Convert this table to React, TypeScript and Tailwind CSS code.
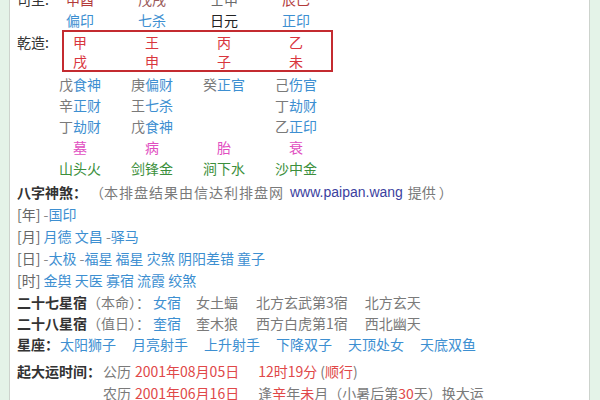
import React from "react";

const F = { fontFamily: '"Noto Sans CJK SC", "Noto Sans", sans-serif' };

const blue = "text-[#3d8fd1]";
const gray = "text-[#7a7a7a]";

function Cols({ items }: { items: React.ReactNode[] }) {
  return (
    <>
      {items.map((it, i) => (
        <div key={i} className="w-[72px] text-center shrink-0">
          {it}
        </div>
      ))}
    </>
  );
}

function Hid({ s, g }: { s: string; g: string }) {
  return (
    <span>
      <span className={gray}>{s}</span>
      <span className={blue}>{g}</span>
    </span>
  );
}

export default function App() {
  return (
    <div
      className="w-[600px] h-[400px] overflow-hidden flex bg-[#e6f4ea] text-[14px] text-[#222] whitespace-nowrap"
      style={F}
    >
      <div className="w-[9px] shrink-0 bg-[#e4f3e8]" />
      <div className="w-[581px] shrink-0 bg-white border-l border-r border-[#cdd3cd] overflow-hidden">
        {/* cut top row */}
        <div className="flex h-[22px] leading-[22px] mt-[-12px] pl-[7px]">
          <div className="w-[27px] shrink-0 text-[#333]">司主:</div>
          <Cols
            items={[
              <span className="text-[#b23a3a]">申酉</span>,
              <span className="text-[#9a5a5a]">戊戌</span>,
              <span className="text-[#6a6a6a]">壬申</span>,
              <span className="text-[#b23a3a]">辰巳</span>,
            ]}
          />
        </div>
        {/* main stars */}
        <div className="flex h-[21px] leading-[21px] pl-[34px]">
          <Cols
            items={[
              <span className={blue}>偏印</span>,
              <span className={blue}>七杀</span>,
              <span className="text-[#222]">日元</span>,
              <span className={blue}>正印</span>,
            ]}
          />
        </div>
        {/* box row */}
        <div className="flex pl-[7px] mt-[-1px]">
          <div className="w-[45px] shrink-0 pt-[3px] leading-[19px] text-[#333]">乾造:</div>
          <div className="w-[271px] h-[42px] border-2 border-[#c42b30] box-border">
            <div className="ml-[-20px] pt-[1px] text-[#d9363e] leading-[19px]">
              <div className="flex h-[19px]">
                <Cols items={["甲", "王", "丙", "乙"]} />
              </div>
              <div className="flex h-[19px]">
                <Cols items={["戌", "申", "子", "未"]} />
              </div>
            </div>
          </div>
        </div>
        {/* hidden stems */}
        <div className="pt-[2px] pl-[34px] leading-[21px]">
          <div className="flex h-[21px]">
            <Cols
              items={[
                <Hid s="戊" g="食神" />,
                <Hid s="庚" g="偏财" />,
                <Hid s="癸" g="正官" />,
                <Hid s="己" g="伤官" />,
              ]}
            />
          </div>
          <div className="flex h-[21px]">
            <Cols items={[<Hid s="辛" g="正财" />, <Hid s="王" g="七杀" />, "", <Hid s="丁" g="劫财" />]} />
          </div>
          <div className="flex h-[21px]">
            <Cols items={[<Hid s="丁" g="劫财" />, <Hid s="戊" g="食神" />, "", <Hid s="乙" g="正印" />]} />
          </div>
          <div className="flex h-[21px] text-[#e14ec1]">
            <Cols items={["墓", "病", "胎", "衰"]} />
          </div>
          <div className="flex h-[21px] text-[#3c8f3c]">
            <Cols items={["山头火", "剑锋金", "涧下水", "沙中金"]} />
          </div>
        </div>
        {/* lower section */}
        <div className="pl-[7px] pt-[2px] leading-[22px]">
          <div className="h-[22px] flex">
            <span className="font-bold text-[#333]">八字神煞：</span>
            <span className={`${gray} ml-[3px]`}>（</span>
            <span className={`${gray} tracking-[1px]`}>本排盘结果由信达利排盘网</span>
            <span
              className="text-[#3b3fa0] ml-[6px]"
              style={{ fontFamily: '"Liberation Sans", Arial, sans-serif' }}
            >
              www.paipan.wang
            </span>
            <span className={`${gray} ml-[5px]`}>提供</span>
            <span className={`${gray} ml-[3px]`}>）</span>
          </div>
          <div className="h-[22px]">
            <span className="text-[#666]">[年]</span> <span className="text-[#888]">-</span>
            <span className={blue}>国印</span>
          </div>
          <div className="h-[22px]">
            <span className="text-[#666]">[月]</span>{" "}
            <span className={blue}>月德 文昌 </span>
            <span className="text-[#888]">-</span>
            <span className={blue}>驿马</span>
          </div>
          <div className="h-[22px]">
            <span className="text-[#666]">[日]</span> <span className="text-[#888]">-</span>
            <span className={blue}>太极 </span>
            <span className="text-[#888]">-</span>
            <span className={blue}>福星 福星 灾煞 阴阳差错 童子</span>
          </div>
          <div className="h-[22px]">
            <span className="text-[#666]">[时]</span>{" "}
            <span className={blue}>金舆 天医 寡宿 流霞 绞煞</span>
          </div>
          <div className="h-[22px] flex">
            <span className="font-bold text-[#333]">二十七星宿</span>
            <span className={gray}>（本命）：</span>
            <span className={`${blue} ml-[3px]`}>女宿</span>
            <span className={`${gray} ml-[15px]`}>女土蝠</span>
            <span className={`${gray} ml-[18px]`}>北方玄武第3宿</span>
            <span className={`${gray} ml-[17px]`}>北方玄天</span>
          </div>
          <div className="h-[21px] leading-[21px] flex">
            <span className="font-bold text-[#333]">二十八星宿</span>
            <span className={gray}>（值日）：</span>
            <span className={`${blue} ml-[3px]`}>奎宿</span>
            <span className={`${gray} ml-[15px]`}>奎木狼</span>
            <span className={`${gray} ml-[18px]`}>西方白虎第1宿</span>
            <span className={`${gray} ml-[17px]`}>西北幽天</span>
          </div>
          <div className="h-[20px] leading-[20px] flex">
            <span className="font-bold text-[#333]">星座：</span>
            <div className={`${blue} ml-[1px] flex gap-[16px]`}>
              <span>太阳狮子</span>
              <span>月亮射手</span>
              <span>上升射手</span>
              <span>下降双子</span>
              <span>天顶处女</span>
              <span>天底双鱼</span>
            </div>
          </div>
          <div className="h-[22px] flex mt-[6px]">
            <span className="font-bold text-[#333]">起大运时间：</span>
            <span className={`${gray} ml-[2px]`}>公历</span>
            <span className="text-[#e04848] ml-[4px]">2001年08月05日</span>
            <span className="text-[#e04848] ml-[19px]">12时19分</span>
            <span className={`${gray} ml-[3px]`}>(</span>
            <span className="text-[#e04848]">顺行</span>
            <span className={gray}>)</span>
          </div>
          <div className="h-[22px] flex pl-[86px]">
            <span className={gray}>农历</span>
            <span className="text-[#e04848] ml-[4px]">2001年06月16日</span>
            <span className={`${gray} ml-[19px]`}>逢</span>
            <span className="text-[#e04848]">辛</span>
            <span className={gray}>年</span>
            <span className="text-[#e04848]">未</span>
            <span className={gray}>月（小暑后第</span>
            <span className="text-[#e04848]">30</span>
            <span className={gray}>天）换大运</span>
          </div>
        </div>
      </div>
      <div className="flex-1 bg-[#e4f3e8]" />
    </div>
  );
}
